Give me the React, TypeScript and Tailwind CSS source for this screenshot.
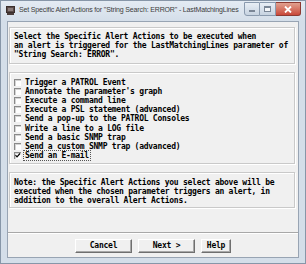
import React from "react";

const mono = { fontFamily: '"DejaVu Sans Mono", "Liberation Mono", monospace' };

const items = [
  "Trigger a PATROL Event",
  "Annotate the parameter's graph",
  "Execute a command line",
  "Execute a PSL statement (advanced)",
  "Send a pop-up to the PATROL Consoles",
  "Write a line to a LOG file",
  "Send a basic SNMP trap",
  "Send a custom SNMP trap (advanced)",
  "Send an E-mail",
];

function Box({ children, className = "" }: { children: React.ReactNode; className?: string }) {
  return (
    <div className={"border border-[#c9c9c9] shadow-[inset_1px_1px_0_#ffffff,1px_1px_0_#ffffff] bg-[#f0f0f0] " + className}>
      {children}
    </div>
  );
}

function Check({ checked }: { checked?: boolean }) {
  return (
    <div className="w-[7px] h-[7px] bg-white border-t border-l border-[#8a8a8a] shadow-[inset_1px_1px_0_#d4d4d4] relative shrink-0">
      {checked && (
        <svg width="7" height="7" viewBox="0 0 7 7" className="absolute left-[-1px] top-[-1px]">
          <path d="M1.5 3.2 L3 4.8 L6 1.5" stroke="#000" strokeWidth="1.2" fill="none" />
        </svg>
      )}
    </div>
  );
}

function Btn({ label, w }: { label: string; w: string }) {
  return (
    <div
      className={
        "h-[14px] flex items-center justify-center bg-[#f0f0f0] border border-t-white border-l-white border-r-[#6f6f6f] border-b-[#6f6f6f] shadow-[inset_-1px_-1px_0_#a8a8a8] text-[8px] font-bold tracking-[-0.25px] text-black " +
        w
      }
      style={mono}
    >
      {label}
    </div>
  );
}

export default function App() {
  return (
    <div className="w-[306px] h-[264px] flex flex-col bg-[#d4dee9] border border-[#8796a8] overflow-hidden">
      {/* Title bar */}
      <div className="h-[20px] flex items-start shrink-0 bg-gradient-to-b from-[#e4ebf3] to-[#d4dee9]">
        <div className="ml-[5px] mt-[5px] w-[9px] h-[9px] shrink-0">
          <svg width="9" height="9" viewBox="0 0 9 9">
            <rect x="0.5" y="0.5" width="8" height="6" fill="#5a4a48" stroke="#3a2e2c" strokeWidth="1" />
            <rect x="2" y="2" width="5" height="3" fill="#8a7c7a" />
            <rect x="1" y="7" width="7" height="2" fill="#4a3c3a" />
          </svg>
        </div>
        <div
          className="ml-[4px] mt-[4px] text-[7px] tracking-[-0.15px] leading-[10px] text-[#3c3c3c] whitespace-nowrap flex-1 min-w-0"
          style={{ fontFamily: '"Liberation Sans", Arial, sans-serif' }}
        >
          Set Specific Alert Actions for "String Search: ERROR" - LastMatchingLines
        </div>
        <div className="flex mt-[1px] mr-[4px] shrink-0">
          <div className="w-[16px] h-[14px] rounded-bl-[3px] border border-[#8a9aae] bg-gradient-to-b from-[#e8eef5] to-[#c7d3e1] flex items-center justify-center">
            <div className="w-[6px] h-[2px] bg-[#f4f6f9] border border-[#7a8696] mt-[4px]" />
          </div>
          <div className="w-[16px] h-[14px] border border-l-0 border-[#8a9aae] bg-gradient-to-b from-[#e8eef5] to-[#c7d3e1] flex items-center justify-center">
            <div className="w-[7px] h-[6px] border border-[#7a8696] border-t-2 bg-[#f4f6f9]" />
          </div>
          <div className="w-[25px] h-[14px] rounded-br-[3px] border border-l-0 border-[#8d3a32] bg-gradient-to-b from-[#e0a08f] to-[#c8473a] flex items-center justify-center">
            <svg width="8" height="7" viewBox="0 0 8 7">
              <path d="M1 0.5 L7 6.5 M7 0.5 L1 6.5" stroke="#ffffff" strokeWidth="1.8" />
            </svg>
          </div>
        </div>
      </div>

      {/* Client area */}
      <div className="flex-1 mx-[6px] mb-[5px] bg-[#f0f0f0] border border-[#98a4b3] flex flex-col text-black" style={mono}>
        <div className="flex flex-col gap-[8px] pl-[1px] pr-[3px] pt-[5px]">
          <Box className="h-[37px] px-[4px] pt-[4px]">
            <div className="text-[8px] leading-[9px] font-bold tracking-[-0.25px] whitespace-pre">
              {"Select the Specific Alert Actions to be executed when\nan alert is triggered for the LastMatchingLines parameter of\n\"String Search: ERROR\"."}
            </div>
          </Box>
          <Box className="h-[92px] pl-[4px] pt-[5px]">
            <div className="flex flex-col">
              {items.map((t, i) => (
                <div key={t} className="h-[9.1px] flex items-center gap-[4px]">
                  <Check checked={i === 8} />
                  <span
                    className={
                      "text-[8px] leading-[9px] font-bold tracking-[-0.25px] whitespace-nowrap " +
                      (i === 8 ? "outline outline-1 outline-dotted outline-[#555] px-[1px] -ml-[1px]" : "")
                    }
                  >
                    {t}
                  </span>
                </div>
              ))}
            </div>
          </Box>
          <Box className="h-[36px] px-[4px] pt-[5px]">
            <div className="text-[8px] leading-[9px] font-bold tracking-[-0.25px] whitespace-pre">
              {"Note: the Specific Alert Actions you select above will be\nexecuted when the chosen parameter triggers an alert, in\naddition to the overall Alert Actions."}
            </div>
          </Box>
        </div>
        <div className="mt-auto border-t border-[#a8a8a8] shadow-[inset_0_1px_0_#ffffff] h-[25px] flex items-start justify-center gap-[6px] pt-[6px]">
          <Btn label="Cancel" w="w-[57px]" />
          <Btn label="Next >" w="w-[57px]" />
          <Btn label="Help" w="w-[30px]" />
        </div>
      </div>
    </div>
  );
}
